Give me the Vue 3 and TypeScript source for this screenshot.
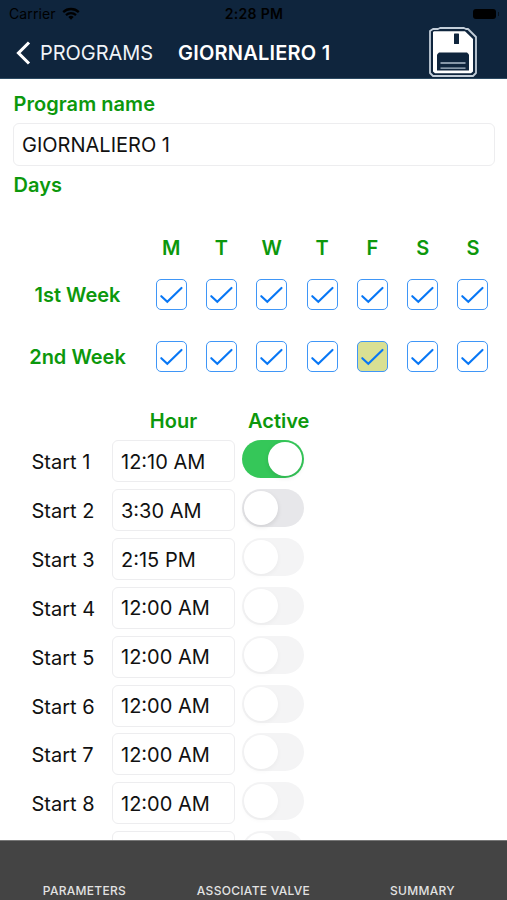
<script setup lang="ts">
import { ref } from 'vue'

interface Week { label: string; days: boolean[]; current: number }
interface Start { hour: string; active: boolean; enabled: boolean }

const programName = ref('GIORNALIERO 1')
const dayNames = ['M', 'T', 'W', 'T', 'F', 'S', 'S']
const weeks = ref<Week[]>([
  { label: '1st Week', days: Array(7).fill(true), current: -1 },
  { label: '2nd Week', days: Array(7).fill(true), current: 4 },
])
const starts = ref<Start[]>([
  { hour: '12:10 AM', active: true, enabled: true },
  { hour: '3:30 AM', active: false, enabled: true },
  { hour: '2:15 PM', active: false, enabled: false },
  ...Array.from({ length: 5 }, () => ({ hour: '12:00 AM', active: false, enabled: false })),
])
</script>

<template>
  <div class="screen">
    <header class="top">
      <div class="status">
        <div class="carrier">
          <span>Carrier</span>
          <svg width="18" height="13" viewBox="0 0 18 13">
            <path d="M1.2 5.1a11.3 11.3 0 0 1 15.6 0" fill="none" stroke="#000" stroke-width="2.3" />
            <path d="M4 8.1a7.2 7.2 0 0 1 10 0" fill="none" stroke="#000" stroke-width="2.2" />
            <path d="M9 12.8L6.3 10.1a3.9 3.9 0 0 1 5.4 0z" />
          </svg>
        </div>
        <span class="clock">2:28 PM</span>
        <div class="power"><span class="battery"></span><span class="cap"></span></div>
      </div>
      <nav class="nav">
        <svg class="chevron" width="16" height="24" viewBox="0 0 16 24">
          <path d="M14 1.5L3.5 12L14 22.5" fill="none" stroke="#fff" stroke-width="3.1" />
        </svg>
        <span class="back">PROGRAMS</span>
        <h1 class="title">{{ programName }}</h1>
        <button class="save" aria-label="Save">
          <svg width="48" height="50" viewBox="0 0 48 50">
            <path d="M4 2H9L11 1H35L37 2H39L47 10V46L44 49H4L1 46V4Z" fill="#0f253d" stroke="#c3ced9" stroke-width="1.8" stroke-linejoin="round" />
            <path d="M5 4.2H36L44 12V44.5L42 46.2H6L4 44.5V5Z" fill="#fff" />
            <rect x="25" y="6.5" width="5" height="10.5" rx=".6" fill="#0f253d" />
            <path d="M10 25.5H38L40 27.5V43.5H8V27.5Z" fill="#0f253d" />
            <path d="M11.5 36H36.5M11.5 41.2H36.5" stroke="#aebdcc" stroke-width="1.3" />
          </svg>
        </button>
      </nav>
    </header>

    <main class="content">
      <div class="label">Program name</div>
      <div class="field name">{{ programName }}</div>
      <div class="label days-label">Days</div>

      <section class="days">
        <div class="day-row names">
          <span></span>
          <span v-for="(d, i) in dayNames" :key="i" class="cell">{{ d }}</span>
        </div>
        <div v-for="week in weeks" :key="week.label" class="day-row">
          <span class="week">{{ week.label }}</span>
          <span v-for="(on, i) in week.days" :key="i" class="cell">
            <span class="check" :class="{ current: week.current === i }">
              <svg v-if="on" width="29" height="29" viewBox="0 0 29 29">
                <path d="M4.3 16.2L10.3 21.7L24.5 7.9" fill="none" stroke="#0877f5" stroke-width="2.1" stroke-linecap="round" stroke-linejoin="miter" />
              </svg>
            </span>
          </span>
        </div>
      </section>

      <section class="starts">
        <div class="start-head"><span></span><span class="hour">Hour</span><span class="active">Active</span></div>
        <div v-for="(s, i) in starts" :key="i" class="start-row">
          <span class="start-name">Start {{ i + 1 }}</span>
          <div class="field">{{ s.hour }}</div>
          <span class="toggle" :class="{ on: s.active, dim: !s.enabled }"><span class="knob"></span></span>
        </div>
        <!-- next row, only its top edge shows above the tab bar -->
        <div class="start-row">
          <span></span>
          <div class="field"></div>
          <span class="toggle dim"><span class="knob"></span></span>
        </div>
      </section>
    </main>

    <footer class="tabs">
      <span class="tab">PARAMETERS</span>
      <span class="tab">ASSOCIATE VALVE</span>
      <span class="tab">SUMMARY</span>
    </footer>
  </div>
</template>

<style>
body { margin: 0; background: #fff; overflow: hidden; }
</style>

<style scoped>
.screen { width: 507px; height: 900px; display: flex; flex-direction: column; overflow: hidden; background: #fff; color: #111; font-family: Inter, "Liberation Sans", sans-serif; font-size: 20px; line-height: 24px; white-space: nowrap; }
.screen * { box-sizing: border-box; }
.top { height: 79px; flex: none; background: #0f253d; border-bottom: 1px solid #2c4a62; }
.status { height: 27px; display: grid; grid-template-columns: 1fr auto 1fr; align-items: center; padding: 0 8px 0 9px; font-size: 14px; color: #000; }
.carrier { display: flex; align-items: center; gap: 6px; letter-spacing: .1px; }
.clock { font-weight: 600; letter-spacing: .3px; }
.power { display: flex; justify-content: flex-end; align-items: center; gap: 2px; }
.battery { width: 23px; height: 10px; border-radius: 3px; background: #000; }
.cap { width: 1px; height: 4px; background: #07111c; }
.nav { height: 51px; display: flex; align-items: center; padding: 0 30px 0 15px; color: #fff; }
.back { margin-left: 9px; width: 138px; letter-spacing: -.05px; color: #f0f4f8; }
.title { margin: 0; font-size: 20px; font-weight: 600; letter-spacing: .22px; }
.save { margin: -2px 0 0 auto; width: 48px; height: 50px; padding: 0; border: 0; background: none; display: flex; }
.content { flex: 1; min-height: 0; overflow: hidden; padding: 13px 12px 0 13px; }
.label, .day-row, .start-head { color: #0c980c; font-weight: 600; }
.label { letter-spacing: .05px; padding-left: .5px; }
.field { height: 42px; display: flex; align-items: center; padding: 1px 8px 0; border: 1px solid #ededef; border-radius: 6px; background: #fff; }
.name { margin-top: 7px; height: 43px; }
.days-label { margin-top: 7px; }
.days { margin-top: 39px; }
.day-row { display: grid; grid-template-columns: 133px repeat(7, 50.3px); align-items: center; height: 62px; }
.day-row.names { height: 23px; margin-bottom: 4px; }
.cell { display: flex; justify-content: center; }
.week { text-align: center; padding: 2px 4px 0 0; }
.check { width: 31px; height: 31px; border: 1px solid #3f96f7; border-radius: 5px; display: flex; }
.check.current { background: #d9e093; }
.starts { margin-top: 17.4px; padding-left: 18.5px; }
.start-head, .start-row { display: grid; grid-template-columns: 80.5px 123px 66px; }
.start-head { height: 36px; padding-bottom: 3px; align-items: center; }
.start-row { height: 48.85px; align-items: start; }
.start-name { line-height: 44px; }
.hour { text-align: center; }
.active { padding-left: 13px; }
.toggle { width: 62px; height: 38px; margin-left: 7px; padding: 2px; border-radius: 19px; background: #e7e7ea; display: flex; }
.toggle.on { background: #35c759; justify-content: flex-end; }
.toggle.dim { background: #f4f4f5; }
.knob { width: 34px; height: 34px; border-radius: 50%; background: #fff; box-shadow: 0 2px 5px rgba(0, 0, 0, .1); }
.dim .knob { box-shadow: 0 2px 5px rgba(0, 0, 0, .04); }
.tabs { height: 60px; flex: none; display: grid; grid-template-columns: repeat(3, 1fr); align-items: end; background: #444; border-top: 1px solid #777; color: #e2e2e2; }
.tab { text-align: center; font-size: 12px; line-height: 18px; font-weight: 500; letter-spacing: .3px; }
</style>
